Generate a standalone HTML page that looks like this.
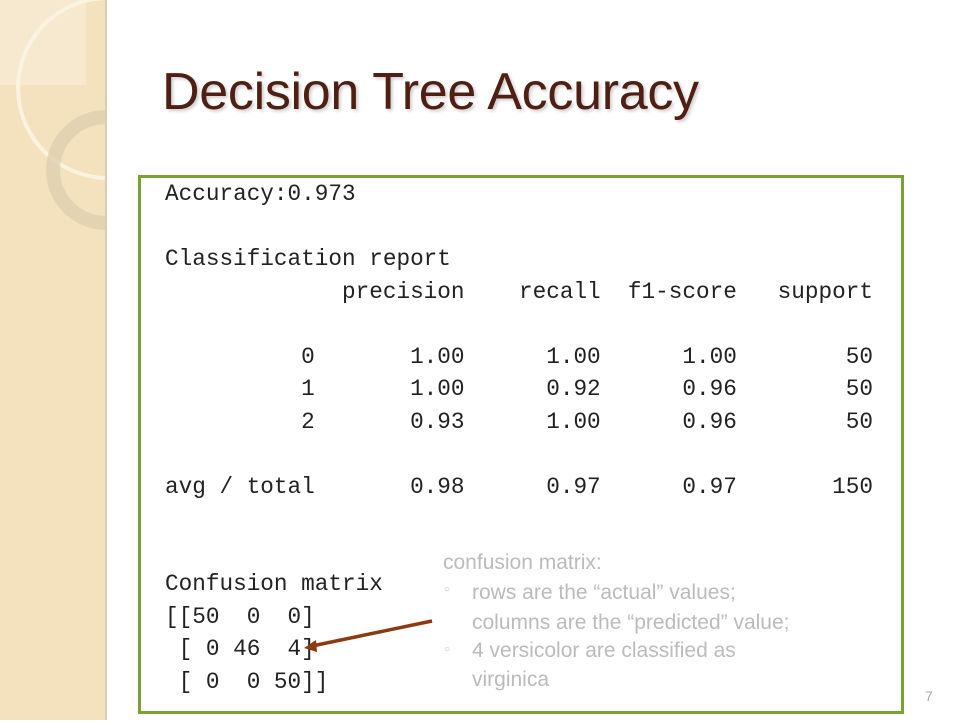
<!DOCTYPE html>
<html><head><meta charset="utf-8"><style>
*{margin:0;padding:0}
body{width:960px;height:720px;position:relative;background:#fff;overflow:hidden;font-family:"Liberation Sans",sans-serif}
#side{position:absolute;left:0;top:0;width:105px;height:720px;background:#f3e2bd;border-right:2px solid #d9cdb5}
#title{position:absolute;left:162px;top:62px;font-size:52px;color:#4e1f12;white-space:nowrap;text-shadow:2px 2px 3px rgba(0,0,0,0.2);letter-spacing:-0.3px}
#box{position:absolute;left:138px;top:175px;width:760px;height:533px;border:3px solid #7aa230}
pre{position:absolute;left:165px;top:178px;font-family:"Liberation Mono",monospace;font-size:22.7px;line-height:32.5px;color:#222}
#ov{position:absolute;left:432px;top:540px;width:402px;height:160px;background:#fff}
#ov div{position:absolute;color:#bbb;font-size:21px;white-space:nowrap}
#pn{position:absolute;left:925px;top:688px;color:#aaa;font-size:14px}
</style></head><body>
<div id="side">
<svg width="105" height="720">
<rect x="0" y="0" width="86" height="85" fill="#f6e9cf"/>
<circle cx="108" cy="88" r="90" fill="none" stroke="#faf3e2" stroke-width="4"/>
<circle cx="106" cy="170" r="53" fill="none" stroke="#dfd0b0" stroke-width="14" opacity="0.8"/>
</svg>
</div>
<div id="title">Decision Tree Accuracy</div>
<div id="box"></div>
<pre>Accuracy:0.973

Classification report
             precision    recall  f1-score   support

          0       1.00      1.00      1.00        50
          1       1.00      0.92      0.96        50
          2       0.93      1.00      0.96        50

avg / total       0.98      0.97      0.97       150


Confusion matrix
[[50  0  0]
 [ 0 46  4]
 [ 0  0 50]]</pre>
<div id="ov">
<div style="left:11px;top:11px">confusion matrix:</div>
<div style="left:12px;top:44px;font-size:10px">○</div>
<div style="left:40px;top:41px">rows are the “actual” values;</div>
<div style="left:40px;top:71px">columns are the “predicted” value;</div>
<div style="left:12px;top:104px;font-size:10px">○</div>
<div style="left:40px;top:99px">4 versicolor are classified as</div>
<div style="left:40px;top:128px">virginica</div>
</div>
<svg style="position:absolute;left:0;top:0" width="960" height="720">
<line x1="432" y1="621" x2="312" y2="646" stroke="#8b3a12" stroke-width="3.5"/>
<polygon points="304,648 316,640 317,652" fill="#8b3a12"/>
</svg>
<div id="pn">7</div>
</body></html>
